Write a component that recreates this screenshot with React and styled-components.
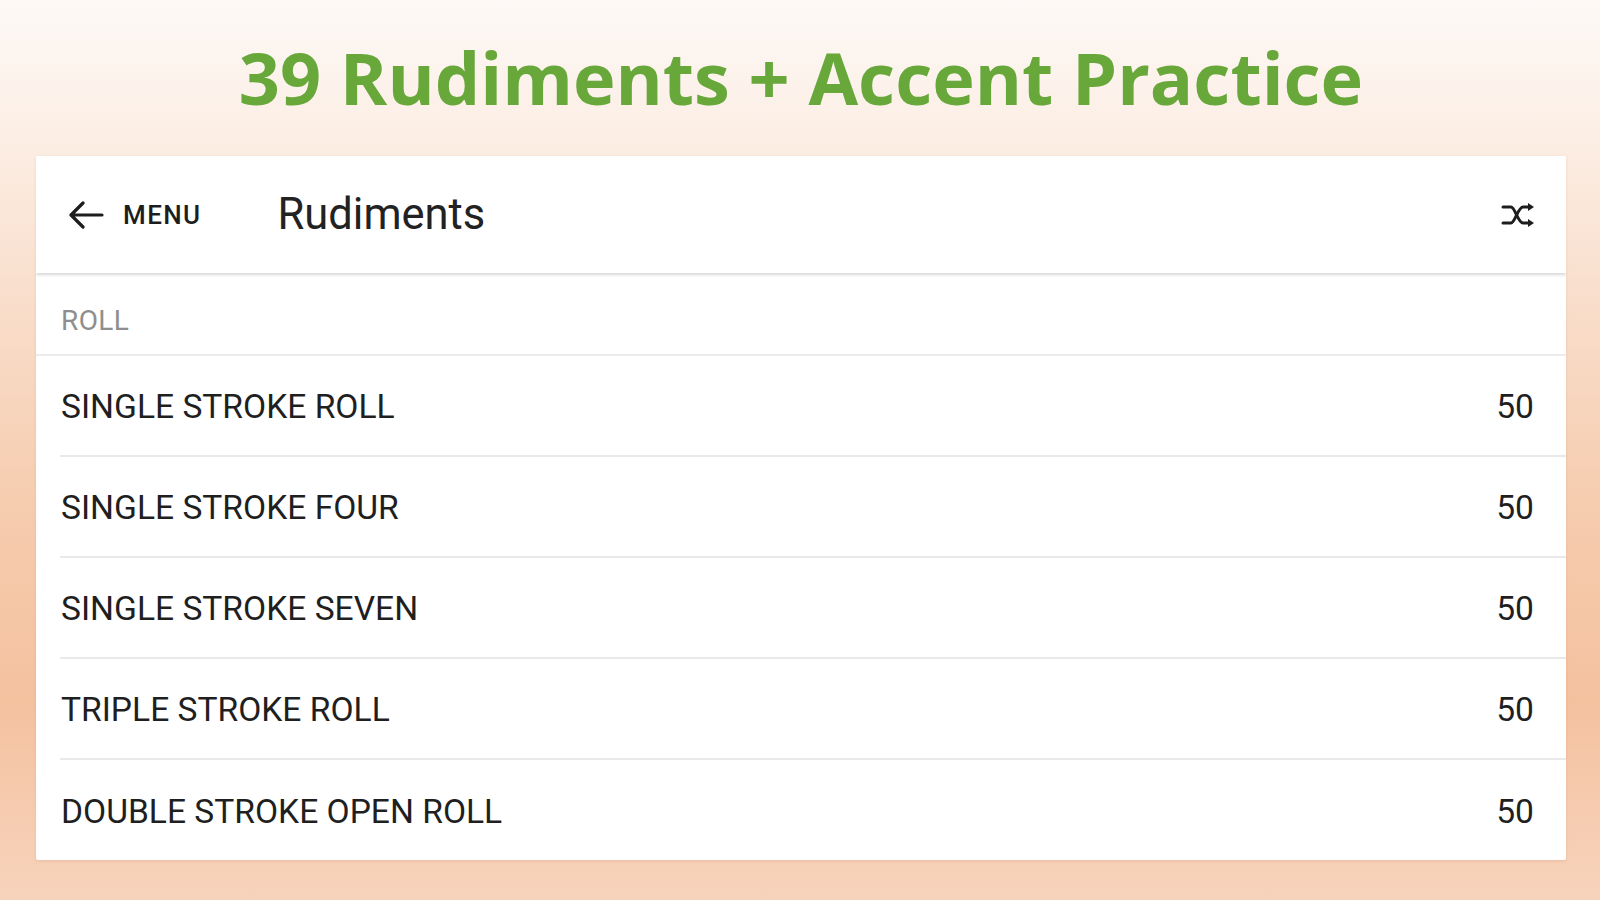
import styled, {createGlobalStyle} from "styled-components";

const GlobalStyle = createGlobalStyle`
  html, body {
    margin: 0;
    padding: 0;
  }

  body {
    font-family: Roboto, "Liberation Sans", sans-serif;
    color: #212121;
  }
`;

const Page = styled.div`
  width: 1600px;
  height: 900px;
  box-sizing: border-box;
  padding: 0 34px 40px 36px;
  display: flex;
  flex-direction: column;
  background: linear-gradient(180deg, #fdf9f6 0%, #fcefe6 14%, #f9dfcd 32%, #f6cdb0 55%, #f4c19f 78%, #f6cdb2 92%, #f7d3bb 100%);
  overflow: hidden;
`;

const Banner = styled.h1`
  margin: 0;
  height: 156px;
  display: flex;
  align-items: center;
  justify-content: center;
  padding-bottom: 2px;
  box-sizing: border-box;
  font-family: "Open Sans", sans-serif;
  font-weight: 700;
  font-size: 72px;
  color: #68a83b;
`;

const Card = styled.div`
  flex: 1;
  display: flex;
  flex-direction: column;
  background: #fff;
  border-radius: 2px;
  overflow: hidden;
  box-shadow: 0 1px 3px rgba(160, 90, 40, 0.15);
`;

const Toolbar = styled.div`
  position: relative;
  z-index: 1;
  height: 117px;
  flex-shrink: 0;
  display: flex;
  align-items: center;
  padding: 0 30px 0 32px;
  background: #fff;
  box-shadow: 0 2px 3px rgba(0, 0, 0, 0.16);
`;

const BackButton = styled.button`
  display: flex;
  align-items: center;
  gap: 19px;
  padding: 0;
  border: 0;
  background: none;
  cursor: pointer;
  font-family: Roboto, sans-serif;
  font-weight: 500;
  font-size: 26px;
  letter-spacing: 1.4px;
  color: #1d1d1d;
`;

const ToolbarTitle = styled.div`
  margin-left: 76px;
  font-size: 43.5px;
  font-weight: 400;
  color: #222;
  flex: 1;
`;

const IconButton = styled.button`
  display: flex;
  padding: 0;
  border: 0;
  background: none;
  cursor: pointer;
`;

const List = styled.div`
  display: flex;
  flex-direction: column;
`;

const SectionHeader = styled.div`
  height: 83px;
  display: flex;
  align-items: center;
  padding: 14px 24px 0 25px;
  box-sizing: border-box;
  border-bottom: 2px solid #ececec;
  font-size: 28px;
  letter-spacing: 0.4px;
  color: #8e8e8e;
`;

const Row = styled.div`
  height: 101px;
  box-sizing: border-box;
  margin-left: 24px;
  padding: 2px 32px 0 1px;
  display: flex;
  align-items: center;
  justify-content: space-between;
  border-bottom: ${({last}) => (last ? "none" : "2px solid #e9e9e9")};
  font-size: 33.6px;
  color: #1f1f1f;
`;

const rudiments = [
  {name: "SINGLE STROKE ROLL", bpm: 50},
  {name: "SINGLE STROKE FOUR", bpm: 50},
  {name: "SINGLE STROKE SEVEN", bpm: 50},
  {name: "TRIPLE STROKE ROLL", bpm: 50},
  {name: "DOUBLE STROKE OPEN ROLL", bpm: 50},
];

const ArrowBack = () => (
  <svg width="36" height="28" viewBox="0 0 36 28">
    <path d="M34 14H4M15 2L3 14l12 12" fill="none" stroke="#1d1d1d" strokeWidth="3.2" strokeLinecap="round" strokeLinejoin="round"/>
  </svg>
);

const Shuffle = () => (
  <svg width="36" height="26" viewBox="0 0 36 26">
    <g fill="none" stroke="#1d1d1d" strokeWidth="3" strokeLinecap="round">
      <path d="M3 5h8c4 0 7 16 12 16h6"/>
      <path d="M3 21h8c4 0 7-16 12-16h6"/>
    </g>
    <path d="M28 1l6 4-6 4zM28 17l6 4-6 4z" fill="#1d1d1d"/>
  </svg>
);

const App = () => {
  return (
    <>
      <GlobalStyle/>
      <Page>
        <Banner>39 Rudiments + Accent Practice</Banner>
        <Card>
          <Toolbar>
            <BackButton>
              <ArrowBack/>
              MENU
            </BackButton>
            <ToolbarTitle>Rudiments</ToolbarTitle>
            <IconButton>
              <Shuffle/>
            </IconButton>
          </Toolbar>
          <List>
            <SectionHeader>ROLL</SectionHeader>
            {rudiments.map((r, i) => (
              <Row key={r.name} last={i === rudiments.length - 1}>
                <span>{r.name}</span>
                <span>{r.bpm}</span>
              </Row>
            ))}
          </List>
        </Card>
      </Page>
    </>
  );
};

export default App;
